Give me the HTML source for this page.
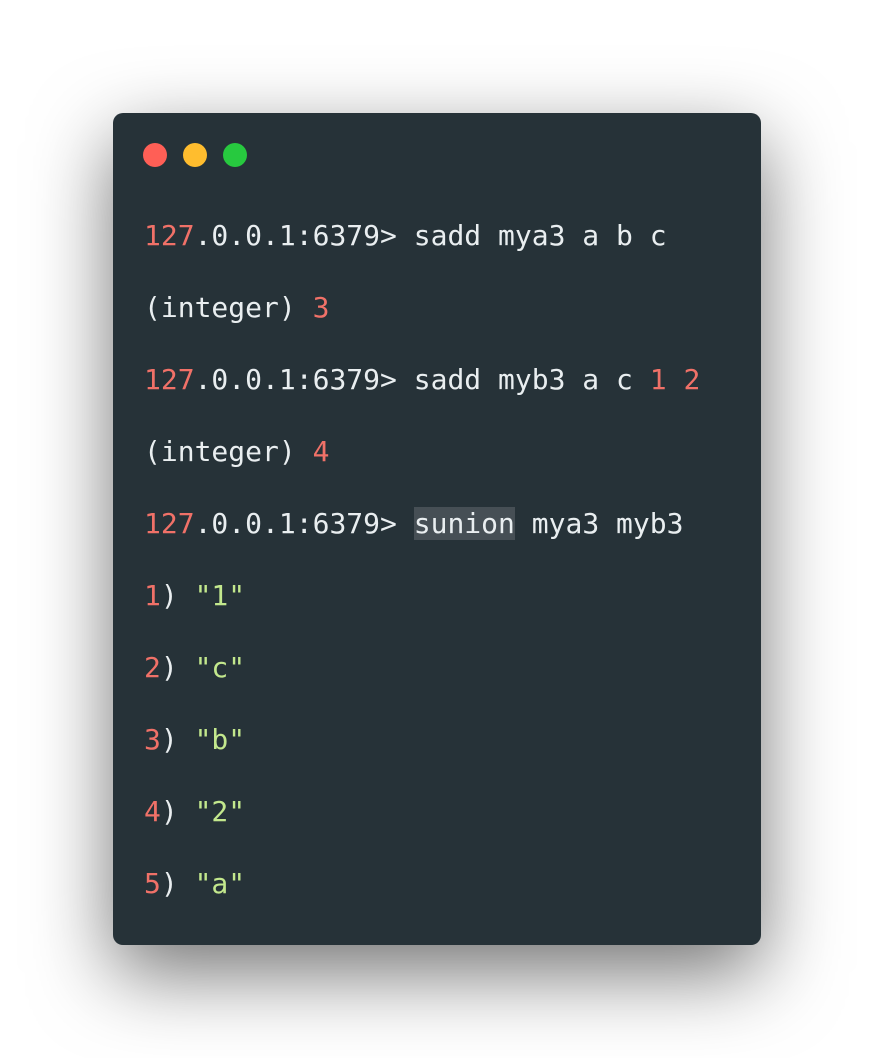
<!DOCTYPE html>
<html><head><meta charset="utf-8">
<style>
html,body{margin:0;padding:0;width:874px;height:1058px;background:#fff;overflow:hidden}
.win{position:absolute;left:113px;top:113px;width:648px;height:832px;background:#263238;border-radius:10px;box-shadow:0 28px 80px rgba(0,0,0,0.55)}
.dot{position:absolute;top:30px;width:24px;height:24px;border-radius:50%}
.l{position:absolute;left:31px;font-family:"DejaVu Sans Mono","Liberation Mono",monospace;font-size:28px;color:#e9eef0;white-space:pre;line-height:36px;height:36px}
.r{color:#f07168}
.g{color:#c3e88d}
.h{background:#464f55}
</style></head><body>
<div class="win">
<div class="dot" style="left:30px;background:#ff5f56"></div>
<div class="dot" style="left:70px;background:#ffbd2e"></div>
<div class="dot" style="left:110px;background:#27c93f"></div>
<div class="l" style="top:105px"><span class="r">127</span>.0.0.1:6379&gt; sadd mya3 a b c</div>
<div class="l" style="top:177px">(integer) <span class="r">3</span></div>
<div class="l" style="top:249px"><span class="r">127</span>.0.0.1:6379&gt; sadd myb3 a c <span class="r">1</span> <span class="r">2</span></div>
<div class="l" style="top:321px">(integer) <span class="r">4</span></div>
<div class="l" style="top:393px"><span class="r">127</span>.0.0.1:6379&gt; <span class="h">sunion</span> mya3 myb3</div>
<div class="l" style="top:465px"><span class="r">1</span>) <span class="g">"1"</span></div>
<div class="l" style="top:537px"><span class="r">2</span>) <span class="g">"c"</span></div>
<div class="l" style="top:609px"><span class="r">3</span>) <span class="g">"b"</span></div>
<div class="l" style="top:681px"><span class="r">4</span>) <span class="g">"2"</span></div>
<div class="l" style="top:753px"><span class="r">5</span>) <span class="g">"a"</span></div>
</div>
</body></html>
